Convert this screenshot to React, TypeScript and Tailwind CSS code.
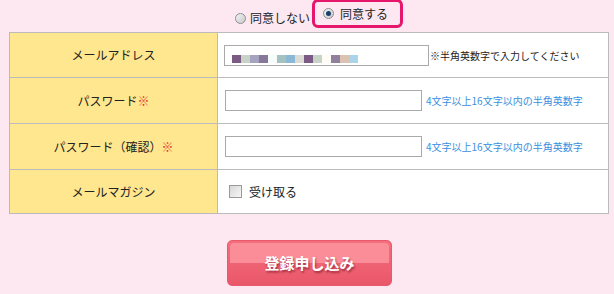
const font = { fontFamily: '"Noto Sans CJK JP", "Noto Sans", sans-serif' };

const blocks = [
  "#7b5a85", "#c8d3c8", "#a6a3c0", "#87789a", "#f6fbfb", "#a3c2c0", "#8ab8d6",
  "#dcdcd4", "#7b5a85", "#c8d3c8", "#fffcf5", "#917f9e", "#dcc2b0", "#a9d4ea",
];

function Radio({ checked }: { checked?: boolean }) {
  return (
    <span className="flex h-[11px] w-[11px] items-center justify-center rounded-full border border-[#8e8e8e] bg-gradient-to-br from-[#f4f4f4] to-[#c9c9c9]">
      {checked && <span className="h-[5px] w-[5px] rounded-full bg-[#1b3f6b]" />}
    </span>
  );
}

function Label({ text, req }: { text: string; req?: boolean }) {
  return (
    <div className="flex w-[208px] items-center justify-center border-r border-[#bbbbbb] bg-[#fee78f] text-[12px] text-[#222]">
      {text}
      {req && <span className="text-[#e8352c]">※</span>}
    </div>
  );
}

function PassInput() {
  return (
    <div className="flex items-center pl-[7px]">
      <div className="h-[21px] w-[197px] border border-[#aaaaaa] bg-white" />
      <span className="ml-[4px] text-[10px] text-[#3b8fe0]">4文字以上16文字以内の半角英数字</span>
    </div>
  );
}

export default function App() {
  return (
    <div className="h-[294px] w-[614px] bg-[#fde7f0] text-[#222]" style={font}>
      <div className="flex h-[32px] items-start pl-[235px] text-[12px]">
        <div className="mt-[9px] flex items-center gap-[4px]">
          <Radio />
          <span>同意しない</span>
        </div>
        <div className="ml-[2px] flex h-[29px] items-center gap-[6px] rounded-[6px] border-[3px] border-[#e5166c] pl-[8px] pr-[12px] -mt-[1px]">
          <Radio checked />
          <span>同意する</span>
        </div>
      </div>

      <div className="ml-[9px] w-[600px] border border-[#bbbbbb] bg-white">
        <div className="flex h-[44px]">
          <Label text="メールアドレス" />
          <div className="flex items-center pl-[6px]">
            <div className="flex h-[21px] w-[205px] items-end border border-[#aaaaaa] bg-white pb-[2px] pl-[7px]">
              {blocks.map((c, i) => (
                <span key={i} className="h-[8px] w-[9px]" style={{ backgroundColor: c }} />
              ))}
            </div>
            <span className="ml-[1px] text-[10px] text-[#222]">※半角英数字で入力してください</span>
          </div>
        </div>
        <div className="flex h-[46px] border-t border-[#bbbbbb]">
          <Label text="パスワード" req />
          <PassInput />
        </div>
        <div className="flex h-[46px] border-t border-[#bbbbbb]">
          <Label text="パスワード（確認）" req />
          <PassInput />
        </div>
        <div className="flex h-[44px] border-t border-[#bbbbbb]">
          <Label text="メールマガジン" />
          <div className="flex items-center pl-[11px] text-[12px]">
            <span className="h-[13px] w-[13px] border border-[#999] bg-gradient-to-br from-[#d8d8d8] to-[#f6f6f6]" />
            <span className="ml-[7px]">受け取る</span>
          </div>
        </div>
      </div>

      <div className="flex pl-[227px] pt-[26px]">
        <button className="relative flex h-[46px] w-[165px] items-center justify-center overflow-hidden rounded-[5px] border border-[#e85a6b] bg-gradient-to-b from-[#f46f7e] to-[#e9566a] text-[15px] font-bold text-white [text-shadow:1px_2px_2px_rgba(120,20,40,0.6)]">
          <span className="absolute left-[2px] right-[2px] top-[2px] h-[20px] rounded-t-[4px] bg-[#fb8d98]" />
          <span className="relative">登録申し込み</span>
        </button>
      </div>
    </div>
  );
}
